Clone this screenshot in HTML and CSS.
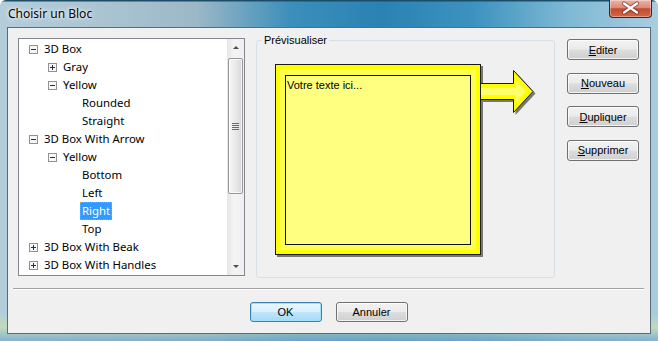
FILE: index.html
```html
<!DOCTYPE html>
<html lang="fr">
<head>
  <meta charset="UTF-8" />
  <meta name="viewport" content="width=device-width, initial-scale=1.0" />
  <title>Choisir un Bloc</title>
  <link rel="stylesheet" href="styles.css">
</head>
<body>

  <div class="window">
    <div class="titlebar">
      <span class="title">Choisir un Bloc</span>
      <button class="close" title="Fermer">
        <svg width="43" height="18" viewBox="0 0 43 18">
          <path d="M15 4.5L28 13.5M28 4.5L15 13.5" stroke="#4a1208" stroke-width="4.2" stroke-linecap="round" opacity=".55"/>
          <path d="M15 4.5L28 13.5M28 4.5L15 13.5" stroke="#fff" stroke-width="2.4" stroke-linecap="round"/>
        </svg>
      </button>
    </div>

    <div class="client">
      <div class="main">

        <div class="tree">
          <ul class="nodes">
            <li class="node l0"><svg class="exp" width="9" height="9" viewBox="0 0 9 9"><rect x=".5" y=".5" width="8" height="8"/><path d="M2 4.5h5"/></svg><span class="label">3D Box</span></li>
            <li class="node l1"><svg class="exp" width="9" height="9" viewBox="0 0 9 9"><rect x=".5" y=".5" width="8" height="8"/><path d="M2 4.5h5M4.5 2v5"/></svg><span class="label">Gray</span></li>
            <li class="node l1"><svg class="exp" width="9" height="9" viewBox="0 0 9 9"><rect x=".5" y=".5" width="8" height="8"/><path d="M2 4.5h5"/></svg><span class="label">Yellow</span></li>
            <li class="node l2"><span class="leaf"></span><span class="label">Rounded</span></li>
            <li class="node l2"><span class="leaf"></span><span class="label">Straight</span></li>
            <li class="node l0"><svg class="exp" width="9" height="9" viewBox="0 0 9 9"><rect x=".5" y=".5" width="8" height="8"/><path d="M2 4.5h5"/></svg><span class="label">3D Box With Arrow</span></li>
            <li class="node l1"><svg class="exp" width="9" height="9" viewBox="0 0 9 9"><rect x=".5" y=".5" width="8" height="8"/><path d="M2 4.5h5"/></svg><span class="label">Yellow</span></li>
            <li class="node l2"><span class="leaf"></span><span class="label">Bottom</span></li>
            <li class="node l2"><span class="leaf"></span><span class="label">Left</span></li>
            <li class="node l2"><span class="leaf"></span><span class="label selected">Right</span></li>
            <li class="node l2"><span class="leaf"></span><span class="label">Top</span></li>
            <li class="node l0"><svg class="exp" width="9" height="9" viewBox="0 0 9 9"><rect x=".5" y=".5" width="8" height="8"/><path d="M2 4.5h5M4.5 2v5"/></svg><span class="label">3D Box With Beak</span></li>
            <li class="node l0"><svg class="exp" width="9" height="9" viewBox="0 0 9 9"><rect x=".5" y=".5" width="8" height="8"/><path d="M2 4.5h5M4.5 2v5"/></svg><span class="label">3D Box With Handles</span></li>
          </ul>
          <div class="vscroll">
            <div class="sb-arrow"><span class="tri up"></span></div>
            <div class="thumb"><span class="grip"></span></div>
            <div class="track"></div>
            <div class="sb-arrow"><span class="tri down"></span></div>
          </div>
        </div>

        <fieldset class="preview">
          <legend>Prévisualiser</legend>
          <svg class="bloc" width="264" height="196" viewBox="0 0 264 196">
            <!-- drop shadow -->
            <g fill="#000" opacity=".5" transform="translate(2 2)">
              <path d="M204 19H238.5V6L258.5 27.5 238.5 49V36H204Z"/>
              <rect width="206" height="191"/>
            </g>
            <!-- arrow -->
            <path d="M204 19.5H238.5V6.5L258 27.5 238.5 48.5V35.5H204Z" fill="#ffff00" stroke="#1a1a1a"/>
            <path d="M204 24H241V16.5L250.5 27.5 241 38.5V31H204Z" fill="#ffff6a"/>
            <!-- box -->
            <rect x=".5" y=".5" width="205" height="190" fill="#ffff00" stroke="#1a1a1a"/>
            <rect x="5" y="5" width="196" height="181" fill="#ffff50"/>
            <rect x="10.5" y="11.5" width="185" height="169" fill="#ffff80" stroke="#111"/>
            <text x="12" y="25" class="bloc-text">Votre texte ici...</text>
          </svg>
        </fieldset>

        <div class="side-buttons">
          <button class="btn"><u>E</u>diter</button>
          <button class="btn"><u>N</u>ouveau</button>
          <button class="btn"><u>D</u>upliquer</button>
          <button class="btn"><u>S</u>upprimer</button>
        </div>

      </div>

      <div class="separator"></div>

      <div class="footer">
        <button class="btn default">OK</button>
        <button class="btn">Annuler</button>
      </div>
    </div>
  </div>

</body>
</html>
```

FILE: styles.css
```css
body {
  margin: 0;
  font-family: "Liberation Sans", Arial, sans-serif;
  font-size: 11px;
  color: #000;
}
.window {
  width: 658px;
  height: 341px;
  box-sizing: border-box;
  display: flex;
  flex-direction: column;
  padding: 0 7px 7px;
  background:
    linear-gradient(180deg, #1d4d66 0, #1d4d66 1px, rgba(255,255,255,0) 2px),
    linear-gradient(180deg, rgba(255,255,255,0) 92%, rgba(200,225,170,0.7) 96%, rgba(120,170,210,0.8) 100%),
    linear-gradient(90deg, #b4cddb 0%, #a8c2d0 18%, #9cb7c6 30%, #3c8fbb 44%, #2a82b3 58%, #3d92bf 72%, #7db8d4 86%, #a9cde0 100%);
  border-radius: 6px 6px 0 0;
}

/* Title bar */
.titlebar { height: 27px; display: flex; align-items: flex-start; }
.title {
  margin: 5px 0 0 1px;
  font-family: "Noto Sans", "Open Sans", sans-serif;
  font-size: 12px;
  line-height: 17px;
  text-shadow: 0 0 6px #fff, 0 0 3px rgba(255,255,255,0.9);
}
.close {
  margin: 0 -1px 0 auto;
  width: 43px;
  height: 18px;
  padding: 0;
  display: block;
  border: 1px solid #4b1f1a;
  border-top: none;
  border-radius: 0 0 4px 4px;
  background: linear-gradient(180deg, #eab4a7 0%, #da8a76 45%, #c44a30 52%, #d26a46 100%);
  box-shadow: inset 0 0 0 1px rgba(255,255,255,0.35);
}
.close svg { display: block; margin: -1px 0 0 -1px; }

/* Client area */
.client {
  flex: 1;
  background: #f0f0f0;
  border: 1px solid #5f6b74;
  padding: 10px 11px 0 10px;
  display: flex;
  flex-direction: column;
}
.main { display: flex; align-items: flex-start; }

/* Tree view */
.tree {
  width: 227px;
  height: 238px;
  box-sizing: border-box;
  margin-right: 11px;
  border: 1px solid #828790;
  background: #fff;
  display: flex;
}
.nodes {
  flex: 1;
  list-style: none;
  margin: 0;
  padding: 1px 0 0;
  overflow: hidden;
  font-family: "Noto Sans", "Open Sans", sans-serif;
  font-size: 11.4px;
}
.node { height: 18px; display: flex; align-items: center; gap: 4px; white-space: nowrap; }
.l0 { padding-left: 10px; }
.l1 { padding-left: 29px; }
.l2 { padding-left: 48px; }
.exp { display: block; flex: none; }
.exp rect { fill: #f7f7f7; stroke: #919191; }
.exp path { stroke: #1e2f55; fill: none; }
.leaf { width: 9px; flex: none; }
.label {
  line-height: 16px;
  padding: 0 1px;
  border: 1px dotted transparent;
}
.label.selected {
  background: #3399ff;
  color: #fff;
  border-color: #d79a3c;
}

/* Scrollbar */
.vscroll {
  width: 17px;
  display: flex;
  flex-direction: column;
  background: linear-gradient(90deg, #e6e6e6, #f4f4f4 40%, #f0f0f0);
}
.sb-arrow { height: 17px; display: flex; align-items: center; justify-content: center; }
.tri { width: 0; height: 0; border-left: 3px solid transparent; border-right: 3px solid transparent; }
.tri.up { border-bottom: 3px solid #4d4d4d; }
.tri.down { border-top: 3px solid #4d4d4d; }
.thumb {
  margin: 2px 1px 0;
  height: 136px;
  box-sizing: border-box;
  border: 1px solid #979797;
  border-radius: 2px;
  background: linear-gradient(90deg, #f6f6f6, #e9e9e9 50%, #d8d8d8);
  box-shadow: inset 0 0 0 1px rgba(255,255,255,0.7);
  display: flex;
  align-items: center;
  justify-content: center;
}
.grip {
  width: 7px;
  height: 7px;
  background: repeating-linear-gradient(180deg, #6a6a6a 0, #6a6a6a 1px, transparent 1px, transparent 2px);
}
.track { flex: 1; }

/* Preview group */
.preview {
  width: 299px;
  height: 244px;
  box-sizing: border-box;
  margin: -4px 12px 0 0;
  padding: 0;
  border: 1px solid #d5dfe5;
  border-radius: 3px;
}
.preview legend {
  margin-left: 5px;
  padding: 0 2px;
  line-height: 13px;
  font-size: 11px;
}
.bloc { display: block; margin: 17px 0 0 18px; }
.bloc-text { font-family: "Liberation Sans", Arial, sans-serif; font-size: 11px; fill: #000; }

/* Buttons */
.side-buttons { display: flex; flex-direction: column; gap: 12.5px; margin-top: 1px; }
.btn {
  width: 72px;
  height: 21px;
  box-sizing: border-box;
  padding: 0;
  border: 1px solid #707070;
  border-radius: 3px;
  background: linear-gradient(180deg, #f2f2f2 0%, #ebebeb 48%, #dddddd 52%, #cfcfcf 100%);
  box-shadow: inset 0 0 0 1px rgba(255,255,255,0.75);
  font-family: "Liberation Sans", Arial, sans-serif;
  font-size: 11px;
  color: #000;
}
.btn u { text-underline-offset: 1px; }
.separator {
  margin: 10px -5px 0 -5px;
  border-top: 1px solid #a0a0a0;
  border-bottom: 1px solid #fff;
}
.footer { display: flex; justify-content: center; gap: 14px; margin-top: 12px; }
.footer .btn { height: 20px; }
.btn.default {
  border-color: #3c7fb1;
  background: linear-gradient(180deg, #eaf6fd 0%, #d9f0fc 48%, #bee6fd 52%, #a7d9f5 100%);
  box-shadow: inset 0 0 0 1px #9fe0fb;
}
```
